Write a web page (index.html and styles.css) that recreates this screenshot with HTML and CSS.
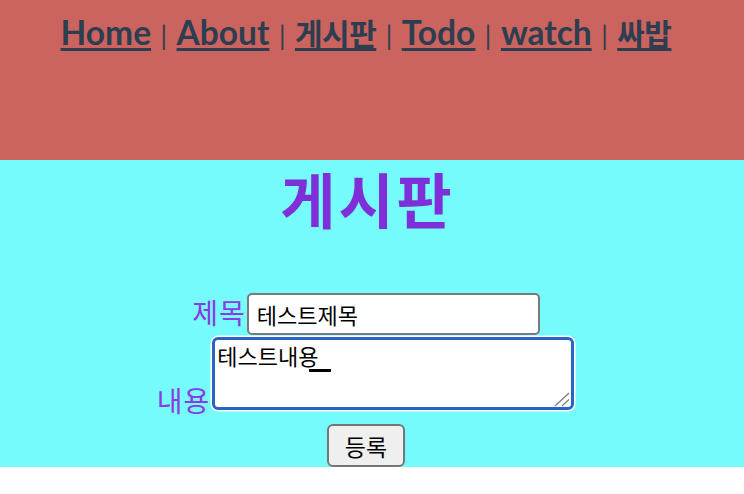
FILE: index.html
```html
<!DOCTYPE html>
<html lang="ko">
<head>
<meta charset="utf-8">
<title>게시판</title>
<link rel="stylesheet" href="styles.css">
</head>
<body>
<div class="app">
  <header class="top">
    <nav class="nav">
      <a href="#" class="nav-link">Home</a><span class="sep">|</span>
      <a href="#" class="nav-link">About</a><span class="sep">|</span>
      <a href="#" class="nav-link ko">게시판</a><span class="sep">|</span>
      <a href="#" class="nav-link">Todo</a><span class="sep">|</span>
      <a href="#" class="nav-link">watch</a><span class="sep">|</span>
      <a href="#" class="nav-link ko">싸밥</a>
    </nav>
  </header>
  <main class="board">
    <h1 class="title">게시판</h1>
    <form class="form">
      <div class="row row-input">
        <label class="label" for="subject">제목</label>
        <input class="field" id="subject" type="text" value="테스트제목">
      </div>
      <div class="row row-area">
        <label class="label label-area" for="content">내용</label>
        <span class="area-wrap">
          <textarea class="area" id="content">테스트내용</textarea>
          <span class="ime"></span>
          <svg class="grip" width="17" height="15" viewBox="0 0 17 15">
            <line x1="1" y1="14" x2="15" y2="1" stroke="#ffffff" stroke-width="3.5"/>
            <line x1="1" y1="14" x2="15" y2="1" stroke="#7a7a7a" stroke-width="1.2"/>
            <line x1="8" y1="14" x2="15" y2="7.5" stroke="#ffffff" stroke-width="3.5"/>
            <line x1="8" y1="14" x2="15" y2="7.5" stroke="#7a7a7a" stroke-width="1.2"/>
          </svg>
        </span>
      </div>
      <div class="row row-btn">
        <button class="btn" type="button">등록</button>
      </div>
    </form>
  </main>
</div>
</body>
</html>
```
FILE: styles.css
```css
html, body {
  margin: 0;
  padding: 0;
  background: #ffffff;
}

.app {
  font-family: "Noto Sans CJK KR", sans-serif;
  color: #2c3e50;
}

.top {
  background: #cb635f;
  height: 160px;
  box-sizing: border-box;
  padding: 12px 12px 0 0;
}

.nav {
  display: flex;
  justify-content: center;
  align-items: baseline;
  gap: 9.5px;
  font-family: Lato, "Noto Sans CJK KR", sans-serif;
  font-size: 33.5px;
  line-height: 40px;
}

.nav-link {
  color: #2c3e50;
  font-weight: 700;
  text-decoration: underline;
  text-decoration-thickness: 3px;
  text-underline-offset: 3px;
}

.nav-link.ko {
  font-family: "Noto Sans CJK KR", sans-serif;
  font-size: 30px;
  letter-spacing: -0.5px;
}

.sep {
  font-weight: 400;
  font-size: 26px;
  color: #2c3e50;
}

.board {
  background: #76fbfd;
  height: 307px;
  box-sizing: border-box;
  padding: 2px 12px 0 0;
  display: flex;
  flex-direction: column;
  align-items: center;
}

.title {
  margin: 0 0 0 3px;
  font-size: 60px;
  line-height: 72px;
  letter-spacing: 3px;
  font-weight: 700;
  color: #7f2fd8;
}

.form {
  margin-top: 59px;
  display: flex;
  flex-direction: column;
  align-items: center;
}

.row {
  display: flex;
  justify-content: center;
}

.row-input {
  align-items: baseline;
}

.row-area {
  align-items: flex-end;
}

.label {
  font-size: 28px;
  letter-spacing: 1px;
  color: #8a3be2;
  line-height: 34px;
}

.label-area {
  margin-bottom: -6px;
  margin-right: 1px;
}

.field {
  box-sizing: border-box;
  width: 293px;
  height: 42px;
  margin: 0 0 0 1px;
  padding: 0 8px;
  border: 2px solid #7a7a7a;
  border-radius: 5px;
  background: #fff;
  font-family: "Noto Sans CJK KR", sans-serif;
  font-size: 22px;
  color: #000;
  outline: none;
}

.area-wrap {
  position: relative;
  display: block;
  margin-top: 1px;
}

.area {
  display: block;
  box-sizing: border-box;
  width: 362px;
  height: 73px;
  margin: 1px;
  padding: 0 2px;
  border: 3px solid #2b62c8;
  border-radius: 6px;
  box-shadow: 0 0 0 1.5px #ffffff;
  background: #fff;
  font-family: "Noto Sans CJK KR", sans-serif;
  font-size: 22px;
  line-height: 30px;
  color: #000;
  outline: none;
  resize: none;
}

.ime {
  position: absolute;
  left: 98px;
  top: 33px;
  width: 22px;
  height: 3px;
  background: #000;
}

.grip {
  position: absolute;
  right: 4px;
  bottom: 4px;
}

.row-btn {
  margin-top: 13px;
}

.btn {
  box-sizing: border-box;
  width: 78px;
  height: 43px;
  padding: 0;
  border: 2px solid #767676;
  border-radius: 6px;
  background: #efefef;
  font-family: "Noto Sans CJK KR", sans-serif;
  font-size: 23px;
  color: #000;
}
```
